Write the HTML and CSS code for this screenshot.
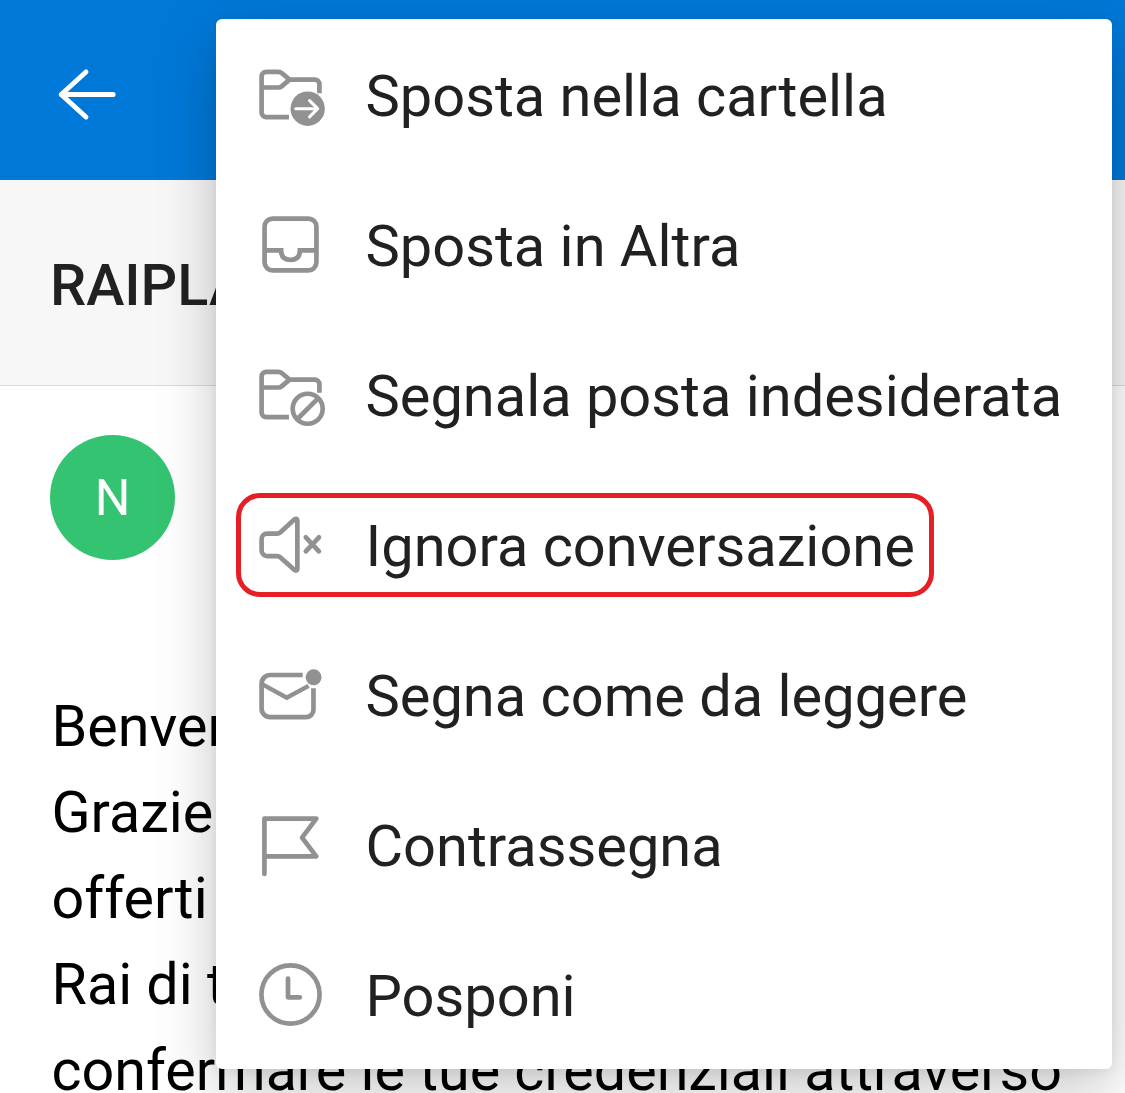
FILE: index.html
```html
<!DOCTYPE html>
<html lang="it">
<head>
    <meta charset="UTF-8">
    <meta name="viewport" content="width=device-width, initial-scale=1.0">
    <title>RAIPLAY</title>
    <link rel="stylesheet" href="styles.css">
</head>
<body>
    <div class="screen">
        <header class="topbar">
            <svg class="back" viewBox="0 0 24 24">
                <path d="M20.200 12H3.600M11.500 4.800L3.600 12l7.900 7.200"/>
            </svg>
        </header>
        <div class="subject">RAIPLAY</div>
        <main class="message">
            <div class="avatar">N</div>
            <div class="text">
                <p>Benvenuto</p>
                <p>Grazie</p>
                <p>offerti</p>
                <p>Rai di t</p>
                <p>confermare le tue credenziali attraverso</p>
            </div>
        </main>

        <ul class="menu">
            <li class="item">
                <svg class="icon" viewBox="0 0 24 24">
                    <path d="M11.500 19.250H4.250a1.500 1.500 0 0 1-1.500-1.500V6.250a1.500 1.500 0 0 1 1.500-1.500h3.900q.6 0 1 .35L11.700 7.250h8.050a1.500 1.500 0 0 1 1.500 1.500V11.600M2.750 9.750h5.400q.6 0 1-.35L11.700 7.250"/>
                    <circle class="solid" cx="17.500" cy="16.550" r="5.500"/>
                    <path class="cut" d="M13.700 16.550h7M18.100 13.950l2.600 2.600-2.600 2.600"/>
                </svg>
                <span>Sposta nella cartella</span>
            </li>
            <li class="item">
                <svg class="icon" viewBox="0 0 24 24">
                    <rect x="3.700" y="3.700" width="16.600" height="16.600" rx="2.600"/>
                    <path d="M3.750 13.900H9q0 3 3 3t3-3h5.250"/>
                </svg>
                <span>Sposta in Altra</span>
            </li>
            <li class="item">
                <svg class="icon" viewBox="0 0 24 24">
                    <path d="M11.500 19.250H4.250a1.500 1.500 0 0 1-1.500-1.500V6.250a1.500 1.500 0 0 1 1.500-1.500h3.900q.6 0 1 .35L11.700 7.250h8.050a1.500 1.500 0 0 1 1.500 1.500V11.400M2.750 9.750h5.400q.6 0 1-.35L11.700 7.250"/>
                    <circle cx="17.500" cy="16.550" r="4.800"/>
                    <path d="M14.200 19.850l6.600-6.600"/>
                </svg>
                <span>Segnala posta indesiderata</span>
            </li>
            <li class="item marked">
                <svg class="icon" viewBox="0 0 24 24">
                    <path d="M13.300 3.950L8.700 8.150q-.4.350-.9.350H4.500a1.750 1.750 0 0 0-1.750 1.750v3.700A1.750 1.750 0 0 0 4.500 15.700h3.300q.5 0 .9.350l4.600 4.100q.9.500.9-.4V4.350q0-.9-.9-.4z"/>
                    <path class="round" d="M16.900 9.700l4.200 4.500M21.100 9.700l-4.200 4.500"/>
                </svg>
                <span>Ignora conversazione</span>
            </li>
            <li class="item">
                <svg class="icon" viewBox="0 0 24 24">
                    <path d="M15.900 5.750H5.500a2.750 2.750 0 0 0-2.750 2.750v8a2.750 2.750 0 0 0 2.750 2.750h11.500a2.350 2.350 0 0 0 2.350-2.350V10"/>
                    <path class="thin" d="M2.900 8.700l7.900 4.350 7-3.800"/>
                    <circle class="solid" cx="19.400" cy="6.500" r="2.550"/>
                </svg>
                <span>Segna come da leggere</span>
            </li>
            <li class="item">
                <svg class="icon" viewBox="0 0 24 24">
                    <path class="round" d="M3.650 21.400V3.700h16.600L15.700 9.800l4.550 6H3.650"/>
                </svg>
                <span>Contrassegna</span>
            </li>
            <li class="item">
                <svg class="icon" viewBox="0 0 24 24">
                    <circle cx="12" cy="12" r="9.300"/>
                    <path class="round" d="M11.200 6.900V12.900h3.800"/>
                </svg>
                <span>Posponi</span>
            </li>
        </ul>
    </div>
</body>
</html>
```
FILE: styles.css
```css
body {
    margin: 0;
    font-family: Roboto, sans-serif;
    background-color: white;
}
.screen {
    position: relative;
    height: 1093px;
    overflow: hidden;
}
.topbar {
    display: flex;
    align-items: center;
    height: 180px;
    padding: 8px 50px 0;
    box-sizing: border-box;
    background-color: #0078d8;
}
.back {
    width: 75px;
    height: 75px;
    fill: none;
    stroke: white;
    stroke-width: 1.6;
    stroke-linecap: round;
    stroke-linejoin: round;
}
.subject {
    height: 206px;
    padding: 3px 50px 0;
    box-sizing: border-box;
    border-bottom: 1px solid #dadada;
    background-color: #f7f7f7;
    color: #212121;
    font-size: 57.5px;
    font-weight: 500;
    line-height: 206px;
}
.message {
    padding: 49px 51.5px 0;
}
.avatar {
    width: 125px;
    height: 125px;
    margin-left: -1.5px;
    border-radius: 50%;
    background-color: #34c471;
    color: white;
    font-size: 50px;
    line-height: 126px;
    text-align: center;
}
.text {
    margin-top: 124px;
    color: black;
    font-size: 57.450px;
    line-height: 86px;
    white-space: nowrap;
}
.text p {
    margin: 0;
}

/* overflow menu over the message */
.menu {
    position: absolute;
    top: 19px;
    left: 216px;
    width: 896px;
    margin: 0;
    padding: 0;
    border-radius: 6px;
    background-color: white;
    box-shadow: 0 20px 60px rgba(0, 0, 0, 0.23), 0 2px 12px rgba(0, 0, 0, 0.06);
    list-style: none;
}
.item {
    position: relative;
    display: flex;
    align-items: center;
    gap: 38px;
    height: 150px;
    padding-left: 36.500px;
    color: #212121;
    font-size: 57.750px;
    white-space: nowrap;
}
.item span {
    padding-top: 3px;
}
.marked::after {
    content: "";
    position: absolute;
    top: 24px;
    left: 20px;
    width: 698px;
    height: 104px;
    box-sizing: border-box;
    border: 5px solid #e51f26;
    border-radius: 24px;
}
.icon {
    width: 75px;
    height: 75px;
    flex-shrink: 0;
    fill: none;
    stroke: #919191;
    stroke-width: 1.5;
}
.icon .solid {
    fill: #919191;
    stroke: none;
}
.icon .cut {
    stroke: white;
    stroke-width: 1;
    stroke-linecap: round;
    stroke-linejoin: round;
}
.icon .thin {
    stroke-width: 1.4;
}
.icon .round {
    stroke-linecap: round;
    stroke-linejoin: round;
}
```
